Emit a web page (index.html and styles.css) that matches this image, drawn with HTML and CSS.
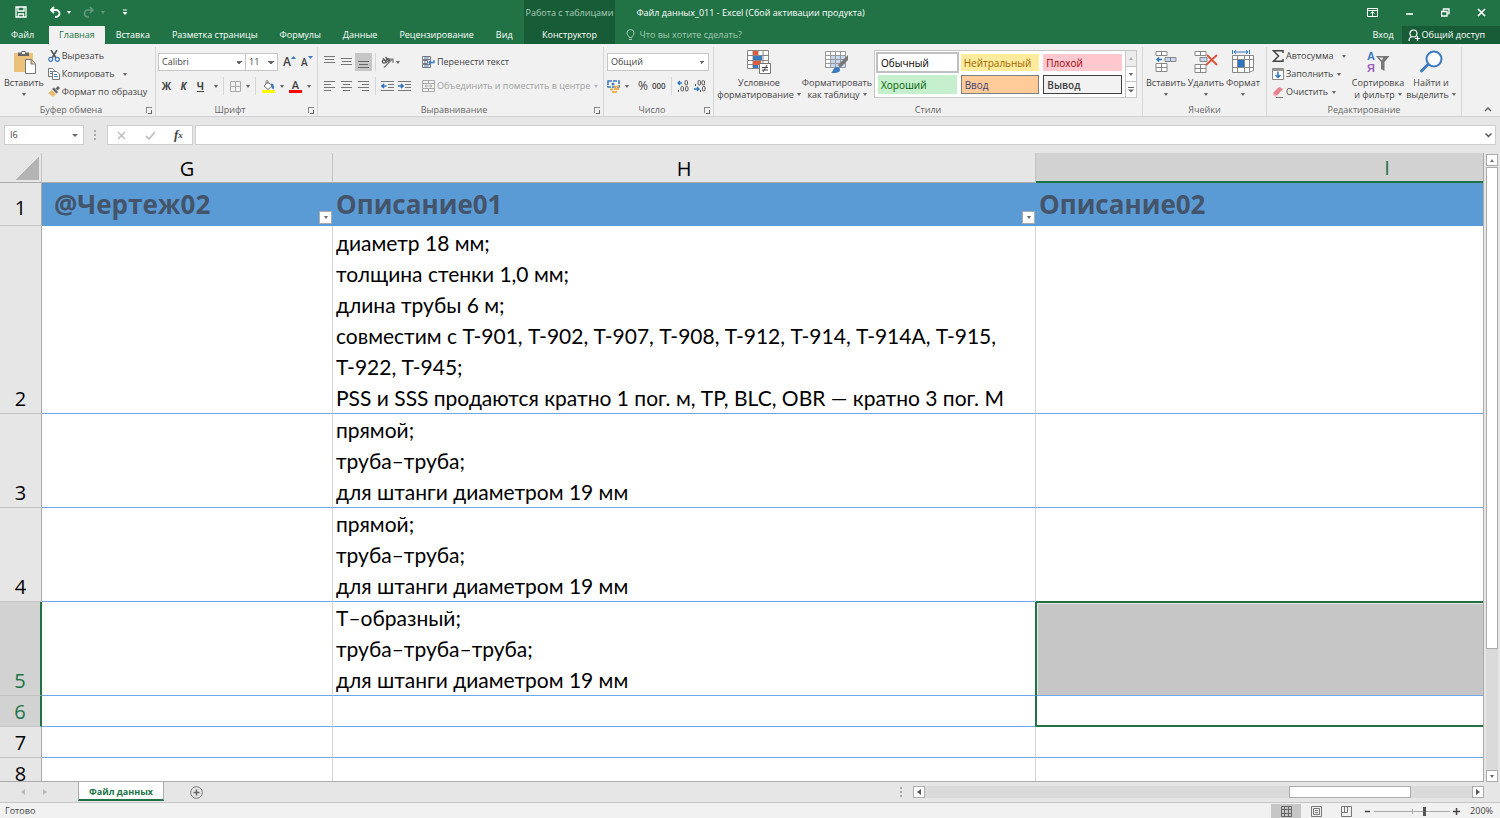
FILE: index.html
```html
<!DOCTYPE html>
<html lang="ru">

<head>
    <meta charset="UTF-8">
    <meta name="viewport" content="width=device-width, initial-scale=1.0">
    <title>Файл данных_011 - Excel</title>
    <link rel="stylesheet" href="styles.css">
</head>

<body>
    <header class="top">
        <div class="top-left">
            <div class="quick">
                <button type="button" aria-label="Сохранить"><svg width="12" height="12" viewBox="0 0 12 12"><path d="M1 1h10v10H1zM3 1v4h6V1M3.5 11V8h5v3" fill="none" stroke="#fff" stroke-width="1.3"/></svg></button>
                <button type="button" class="undo" aria-label="Отменить"><svg width="12" height="12" viewBox="0 0 12 12"><path d="M5 1L2 4l3 3M2 4h5a3 3 0 0 1 0 7H6" fill="none" stroke="#fff" stroke-width="1.8"/></svg><i class="arr"></i></button>
                <button type="button" class="redo" aria-label="Вернуть"><svg width="12" height="12" viewBox="0 0 12 12"><path d="M7 1l3 3-3 3M10 4H5a3 3 0 0 0 0 7h1" fill="none" stroke="#fff" stroke-width="1.6"/></svg><i class="arr"></i></button>
                <button type="button" class="custom" aria-label="Настройка панели"><svg width="6" height="7" viewBox="0 0 6 7"><path d="M1 1h4" stroke="#fff"/><path d="M0.500 3h5L3 6z" fill="#fff"/></svg></button>
            </div>
            <nav class="tabs">
                <a href="#" class="file">Файл</a>
                <a href="#" class="on">Главная</a>
                <a href="#">Вставка</a>
                <a href="#">Разметка страницы</a>
                <a href="#">Формулы</a>
                <a href="#">Данные</a>
                <a href="#">Рецензирование</a>
                <a href="#">Вид</a>
            </nav>
        </div>
        <div class="context">
            <span>Работа с таблицами</span>
            <a href="#">Конструктор</a>
        </div>
        <div class="top-right">
            <div class="caption">
                <h1>Файл данных_011 - Excel (Сбой активации продукта)</h1>
                <div class="win">
                    <button type="button" aria-label="Параметры ленты"><svg width="11" height="9" viewBox="0 0 11 9"><path d="M.5.5h10v8H.5zM1 2.500h9M5.500 8V4M3.500 5.500l2-2 2 2" fill="none" stroke="#fff"/></svg></button>
                    <button type="button" aria-label="Свернуть"><svg width="9" height="9" viewBox="0 0 9 9"><path d="M1 6h7" stroke="#fff" stroke-width="1.600"/></svg></button>
                    <button type="button" aria-label="Восстановить"><svg width="9" height="9" viewBox="0 0 9 9"><path d="M.5 3.500h5.500v4.500H.5zM2.500 3V1h5.500v4.500H6.500" fill="none" stroke="#fff" stroke-width="1.300"/></svg></button>
                    <button type="button" aria-label="Закрыть"><svg width="9" height="9" viewBox="0 0 9 9"><path d="M1 1l7 7M8 1L1 8" stroke="#fff" stroke-width="1.700"/></svg></button>
                </div>
            </div>
            <div class="tellrow">
                <label for="tell"><svg width="9" height="12" viewBox="0 0 9 12"><path d="M3 8.500C3 7 1 6 1 4a3.500 3.500 0 0 1 7 0c0 2-2 3-2 4.500zM3 10.500h3" fill="none" stroke="#a3cbb3"/></svg></label>
                <input id="tell" type="text" placeholder="Что вы хотите сделать?">
                <a href="#" class="login">Вход</a>
                <button type="button" class="share"><svg width="12" height="13" viewBox="0 0 12 13"><circle cx="5.500" cy="4.500" r="3.500" fill="none" stroke="#fff" stroke-width="1.200"/><path d="M1 12c0-2.500 1-4 3-4.500M9.500 7v5M7 9.500h5" fill="none" stroke="#fff" stroke-width="1.200"/></svg>Общий доступ</button>
            </div>
        </div>
    </header>

    <div class="ribbon">
        <section class="group clip">
            <div class="body">
                <button type="button" class="big"><svg width="24" height="24" viewBox="0 0 24 24"><path d="M2 3h19v19H2z" fill="#ecc27b"/><path d="M6 6V2.500h3.500V1h4v1.500H17V6z" fill="#666"/><path d="M10 2h3v2h-3z" fill="#f1f1f1"/><path d="M13.500 9.500h6l4 4v10h-10zM19 9.500V14h4.500" fill="#fff" stroke="#777"/></svg><span>Вставить</span><i class="arr"></i></button>
                <div class="list">
                    <button type="button"><svg width="12" height="12" viewBox="0 0 12 12"><path d="M3 0l5 8M9 0L4 8" stroke="#555" stroke-width="1.500"/><circle cx="2.700" cy="9.300" r="2" fill="none" stroke="#3c7abf" stroke-width="1.200"/><circle cx="9.300" cy="9.300" r="2" fill="none" stroke="#3c7abf" stroke-width="1.200"/></svg>Вырезать</button>
                    <button type="button"><svg width="12" height="12" viewBox="0 0 12 12"><path d="M.5.5h4l2 2v6h-6z" fill="#fff" stroke="#777"/><path d="M2 3.500h2M2 5.500h2" stroke="#3c7abf"/><path d="M4.500 3.500h4l3 2.500v5.500h-7z" fill="#fff" stroke="#777"/><path d="M6 6.500h3M6 8.500h4" stroke="#3c7abf"/></svg>Копировать<i class="arr far"></i></button>
                    <button type="button"><svg width="12" height="12" viewBox="0 0 12 12"><path d="M0 7l4-3 4 4-3 3-1-1z" fill="#ecb970"/><path d="M4 3l2-1.500L10 6 8.500 7.500zM7.500 2.500L10 0l2 2-2.500 2.500z" fill="#666"/></svg>Формат по образцу</button>
                </div>
            </div>
            <h2>Буфер обмена</h2><button type="button" class="launch" aria-label="Буфер обмена"></button>
        </section>

        <section class="group font">
            <div class="body rows">
                <div class="row">
                    <select class="fname" aria-label="Шрифт"><option>Calibri</option></select>
                    <select class="fsize" aria-label="Размер"><option>11</option></select>
                    <button type="button" class="grow" aria-label="Увеличить"><b class="ga">A</b><svg width="5" height="4" viewBox="0 0 5 4"><path d="M0 3l2.500-3L5 3z" fill="#3c7abf"/></svg></button>
                    <button type="button" class="grow small" aria-label="Уменьшить"><b class="ga">A</b><svg width="5" height="4" viewBox="0 0 5 4"><path d="M0 0l2.500 3L5 0z" fill="#3c7abf"/></svg></button>
                </div>
                <div class="row second">
                    <button type="button" class="fmt"><b>Ж</b></button>
                    <button type="button" class="fmt"><b><em>К</em></b></button>
                    <button type="button" class="fmt"><b><u>Ч</u></b></button>
                    <i class="arr"></i>
                    <i class="bar"></i>
                    <button type="button" aria-label="Границы"><svg width="11" height="11" viewBox="0 0 11 11"><path d="M.5.5h10v10H.5zM5.500 0v11M0 5.500h11" fill="none" stroke="#aaa"/></svg></button>
                    <i class="arr"></i>
                    <i class="bar"></i>
                    <button type="button" aria-label="Цвет заливки"><svg width="13" height="13" viewBox="0 0 13 13"><path d="M2 6l4-4 4 4-4 3.500zM4 4V1.500a1 1 0 0 1 2 0V4" fill="#fff" stroke="#777"/><path d="M9 3.500c3 0 3.500 3 2.500 6-1.500-.5-2.500-3-2.500-6z" fill="#3c7abf"/><path d="M0 10h13v3H0z" fill="#ff0"/></svg></button>
                    <i class="arr"></i>
                    <button type="button" class="color" aria-label="Цвет текста">A</button>
                    <i class="arr"></i>
                </div>
            </div>
            <h2>Шрифт</h2><button type="button" class="launch" aria-label="Шрифт"></button>
        </section>

        <section class="group align">
            <div class="body">
                <div class="rows">
                    <div class="row">
                        <button type="button" class="al" aria-label="По верхнему краю"><svg width="11" height="12" viewBox="0 0 11 12"><path d="M0 .5h11M1 3.500h9M0 6.500h11" stroke="#777"/></svg></button>
                        <button type="button" class="al" aria-label="Посередине"><svg width="11" height="12" viewBox="0 0 11 12"><path d="M0 2.500h11M1 5.500h9M0 8.500h11" stroke="#777"/></svg></button>
                        <button type="button" class="al pressed" aria-label="По нижнему краю"><svg width="11" height="12" viewBox="0 0 11 12"><path d="M0 5.500h11M1 8.500h9M0 11.500h11" stroke="#666"/></svg></button>
                        <i class="bar"></i>
                        <button type="button" class="al" aria-label="Ориентация"><svg width="13" height="12" viewBox="0 0 13 12"><path d="M3 11.500L11.500 3M8 3h4v4" fill="none" stroke="#777" stroke-width="1.200"/><circle cx="3" cy="5.500" r="1.700" fill="none" stroke="#555" stroke-width="1.200"/><path d="M2 2l4 5M4.500 1l3.500 4" stroke="#555" stroke-width="1.200"/><circle cx="7" cy="4" r="1.500" fill="none" stroke="#555"/></svg></button>
                        <i class="arr"></i>
                    </div>
                    <div class="row second">
                        <button type="button" class="al" aria-label="По левому краю"><svg width="11" height="10" viewBox="0 0 11 10"><path d="M0 .5h11M0 3.500h7M0 6.500h11M0 9.500h7" stroke="#777"/></svg></button>
                        <button type="button" class="al" aria-label="По центру"><svg width="11" height="10" viewBox="0 0 11 10"><path d="M0 .5h11M2 3.500h7M0 6.500h11M2 9.500h7" stroke="#777"/></svg></button>
                        <button type="button" class="al" aria-label="По правому краю"><svg width="11" height="10" viewBox="0 0 11 10"><path d="M0 .5h11M4 3.500h7M0 6.500h11M4 9.500h7" stroke="#777"/></svg></button>
                        <i class="bar"></i>
                        <button type="button" class="al" aria-label="Уменьшить отступ"><svg width="13" height="10" viewBox="0 0 13 10"><path d="M0 .5h13M7 3.500h6M7 6.500h6M0 9.500h13" stroke="#777"/><path d="M5.500 5H1M3 3L1 5l2 2" fill="none" stroke="#2f75bd" stroke-width="1.700"/></svg></button>
                        <button type="button" class="al" aria-label="Увеличить отступ"><svg width="13" height="10" viewBox="0 0 13 10"><path d="M0 .5h13M7 3.500h6M7 6.500h6M0 9.500h13" stroke="#777"/><path d="M0 5h4.500M3 3l2 2-2 2" fill="none" stroke="#2f75bd" stroke-width="1.700"/></svg></button>
                    </div>
                </div>
                <div class="rows wrap">
                    <button type="button" class="row"><svg width="13" height="13" viewBox="0 0 13 13"><path d="M.5.5h8v3h-8zM.5 4.500h5v3h-5zM.5 8.500h8v3h-8z" fill="#fff" stroke="#777"/><path d="M2 2h5M2 6h2M2 10h5" stroke="#3c7abf"/><path d="M12 4v2.500H7M9 4.500l-2 2 2 2" fill="none" stroke="#3c7abf" stroke-width="1.300"/></svg>Перенести текст</button>
                    <button type="button" class="row second off"><svg width="13" height="12" viewBox="0 0 13 12"><path d="M.5.5h12v11H.5zM.5 3.500h12M.5 8.500h12M6.500.5v3M6.500 8.500v3M3 6h7M4.500 4.500L3 6l1.500 1.500M8.500 4.500L10 6 8.500 7.500" fill="none" stroke="#aaa"/></svg>Объединить и поместить в центре<i class="arr"></i></button>
                </div>
            </div>
            <h2>Выравнивание</h2><button type="button" class="launch" aria-label="Выравнивание"></button>
        </section>

        <section class="group number">
            <div class="body rows">
                <div class="row"><select class="nf" aria-label="Числовой формат"><option>Общий</option></select></div>
                <div class="row second">
                    <button type="button" aria-label="Финансовый формат"><svg width="13" height="13" viewBox="0 0 13 13"><path d="M1 1h11v6H1z" fill="#fff" stroke="#3c7abf" stroke-width="1.600" stroke-dasharray="4 1"/><circle cx="6" cy="4" r="1.500" fill="#3c7abf"/><path d="M7 6.500h5M7 9h5M3 9.500h3M5 12h5" stroke="#ecb250" stroke-width="1.800"/></svg></button>
                    <i class="arr"></i>
                    <button type="button" class="pct">%</button>
                    <button type="button" class="zeros">000</button>
                    <i class="bar"></i>
                    <button type="button" aria-label="Увеличить разрядность"><svg width="12" height="12" viewBox="0 0 12 12"><path d="M5 3H1M3 1L1 3l2 2" fill="none" stroke="#2f75bd" stroke-width="1.300"/><rect x="8" y=".5" width="2.500" height="4.500" rx="1.200" fill="none" stroke="#555"/><rect x="4" y="6.500" width="2.500" height="4.500" rx="1.200" fill="none" stroke="#555"/><rect x="8.500" y="6.500" width="2.500" height="4.500" rx="1.200" fill="none" stroke="#555"/><path d="M1.500 10v2" stroke="#555"/></svg></button>
                    <button type="button" class="dec" aria-label="Уменьшить разрядность"><svg width="12" height="12" viewBox="0 0 12 12"><path d="M0 9h4.500M3 7l2 2-2 2" fill="none" stroke="#2f75bd" stroke-width="1.300"/><rect x="4" y=".5" width="2.500" height="4.500" rx="1.200" fill="none" stroke="#555"/><rect x="8" y=".5" width="2.500" height="4.500" rx="1.200" fill="none" stroke="#555"/><rect x="8.500" y="6.500" width="2.500" height="4.500" rx="1.200" fill="none" stroke="#555"/><path d="M6.500 10v2M1.500 4v2" stroke="#555"/></svg></button>
                </div>
            </div>
            <h2>Число</h2><button type="button" class="launch" aria-label="Число"></button>
        </section>

        <section class="group styles">
            <div class="body">
                <button type="button" class="big cond"><svg width="24" height="24" viewBox="0 0 24 24"><path d="M.5.5h21v18H.5z" fill="#fff"/><path d="M.5.5h21v18H.5zM.5 5.500h21M.5 10.500h21M.5 14.500h21M6 .5v18M11 .5v18M16 .5v18" fill="none" stroke="#888"/><path d="M6 1h5v4H6zM6 11h8v4H6z" fill="#e2593b"/><path d="M6 6h9v4H6zM6 15h5v3H6z" fill="#3c7abf"/><path d="M12.500 13.500h11v10h-11z" fill="#fff" stroke="#777"/><path d="M15 17.500h6M15 20h6M20 15l-4 7" stroke="#444"/></svg><span>Условное<br>форматирование<i class="arr"></i></span></button>
                <button type="button" class="big tbl"><svg width="24" height="24" viewBox="0 0 24 24"><path d="M.5 1.500h20v16H.5z" fill="#fff"/><path d="M6 6h14v11H6z" fill="#c3d7ee"/><path d="M.5 1.500h20v16H.5zM.5 5.500h20M.5 9.500h20M.5 13.500h20M5.500 1.500v16M10.500 1.500v16M15.500 1.500v16" fill="none" stroke="#999"/><path d="M23 5v5l-8 8-2-3z" fill="#777"/><path d="M6 23c2-1 2-6 6-6 3 0 4 3 2 5-2 1-5 1-8 1z" fill="#3c7abf"/></svg><span>Форматировать<br>как таблицу<i class="arr"></i></span></button>
                <div class="gallery">
                    <div class="cards">
                        <button type="button" class="normal">Обычный</button>
                        <button type="button" class="neutral">Нейтральный</button>
                        <button type="button" class="bad">Плохой</button>
                        <button type="button" class="good">Хороший</button>
                        <button type="button" class="in">Ввод</button>
                        <button type="button" class="out">Вывод</button>
                    </div>
                    <div class="spin">
                        <button type="button" class="dim" aria-label="Вверх"><i class="arr up"></i></button>
                        <button type="button" aria-label="Вниз"><i class="arr"></i></button>
                        <button type="button" aria-label="Все стили"><svg width="6" height="6" viewBox="0 0 6 6"><path d="M0 .5h6" stroke="#666"/><path d="M0 2.500h6L3 5.500z" fill="#666"/></svg></button>
                    </div>
                </div>
            </div>
            <h2>Стили</h2>
        </section>

        <section class="group cells">
            <div class="body">
                <button type="button" class="big"><svg width="24" height="24" viewBox="0 0 24 24"><path d="M2 1.500h11v4H2zM7.500 1.500v4M2 13.500h11v8H2zM2 17.500h11M7.500 13.500v8" fill="#fff" stroke="#888"/><path d="M11 7.500h11v4H11zM16.500 7.500v4" fill="#c3d7ee" stroke="#888"/><path d="M8 9.500H3M5 7.500l-2 2 2 2" fill="none" stroke="#2f75bd" stroke-width="1.500"/></svg><span>Вставить</span><i class="arr"></i></button>
                <button type="button" class="big"><svg width="24" height="24" viewBox="0 0 24 24"><path d="M1 1.500h11v4H1zM6.500 1.500v4M1 14.500h11v8H1zM1 18.500h11M6.500 14.500v8" fill="#fff" stroke="#888"/><path d="M6 7.500h7v4H6z" fill="#c3d7ee" stroke="#888"/><path d="M13 5l10 10M23 5L12 15" stroke="#dd5136" stroke-width="1.800"/></svg><span>Удалить</span><i class="arr"></i></button>
                <button type="button" class="big"><svg width="24" height="24" viewBox="0 0 24 24"><path d="M1.500 5.500h21v15l-5 2h-16z" fill="#fff" stroke="#888"/><path d="M1.500 9.500h21M1.500 17.500h21M6.500 5.500v17M13.500 5.500v17M18.500 5.500v17" stroke="#888"/><path d="M7 10h6v7H7z" fill="#2f75bd"/><path d="M1.500 0v4M18.500 0v4M3 2h14M5 0L3 2l2 2M15 0l2 2-2 2" fill="none" stroke="#2f75bd"/></svg><span>Формат</span><i class="arr"></i></button>
            </div>
            <h2>Ячейки</h2>
        </section>

        <section class="group edit">
            <div class="body">
                <div class="list">
                    <button type="button"><svg width="12" height="12" viewBox="0 0 12 12"><path d="M11 3V.8H1.500L6.500 6l-5 5.200H11V9" fill="none" stroke="#444" stroke-width="1.500"/></svg>Автосумма<i class="arr far"></i></button>
                    <button type="button"><svg width="12" height="12" viewBox="0 0 12 12"><path d="M.5.5h11v11H.5z" fill="#fff" stroke="#888"/><path d="M1 2h10" stroke="#999" stroke-width="2"/><path d="M6 3.500V10M3.500 7L6 9.500 8.500 7" fill="none" stroke="#2f75bd" stroke-width="1.500"/></svg>Заполнить<i class="arr"></i></button>
                    <button type="button"><svg width="12" height="12" viewBox="0 0 12 12"><path d="M1 7l6-6 4 2-6 6.500H2z" fill="#e8808f"/><path d="M1 7l4 2.500L3.500 11 1 9z" fill="#f5b6be"/><path d="M4 11.500h7" stroke="#777"/></svg>Очистить<i class="arr"></i></button>
                </div>
                <button type="button" class="big sort"><svg width="24" height="24" viewBox="0 0 24 24"><text x="1" y="10" class="la">А</text><text x="1" y="22" class="ya">Я</text><path d="M10 6h13.500l-5 6v9l-3.500-2v-7z" fill="#777"/><path d="M13 7.500h4l-1 3z" fill="#eee"/></svg><span>Сортировка<br>и фильтр<i class="arr"></i></span></button>
                <button type="button" class="big find"><svg width="24" height="24" viewBox="0 0 24 24"><circle cx="15" cy="9" r="7.500" fill="#fff" stroke="#3c7abf" stroke-width="2"/><path d="M9 14.500L2.500 21" stroke="#3c7abf" stroke-width="3" stroke-linecap="round"/></svg><span>Найти и<br>выделить<i class="arr"></i></span></button>
            </div>
            <h2>Редактирование</h2>
        </section>
        <button type="button" class="fold" aria-label="Свернуть ленту"><svg width="8" height="5" viewBox="0 0 8 5"><path d="M1 4l3-3 3 3" fill="none" stroke="#666" stroke-width="1.500"/></svg></button>
    </div>

    <div class="fbar">
        <div class="namebox"><input type="text" value="I6" aria-label="Имя"><i class="arr"></i></div>
        <i class="dots"></i>
        <div class="fbtns">
            <button type="button" aria-label="Отмена"><svg width="9" height="9" viewBox="0 0 9 9"><path d="M1 1l7 7M8 1L1 8" stroke="#bbb" stroke-width="1.300"/></svg></button>
            <button type="button" aria-label="Ввод"><svg width="11" height="9" viewBox="0 0 11 9"><path d="M1 5l3 3 6-7" fill="none" stroke="#bbb" stroke-width="1.600"/></svg></button>
            <button type="button" class="fx">f<small>x</small></button>
        </div>
        <div class="formula"><input type="text" aria-label="Строка формул"><svg width="7" height="5" viewBox="0 0 7 5"><path d="M.5.5l3 3 3-3" fill="none" stroke="#555" stroke-width="1.500"/></svg></div>
    </div>

    <main class="work">
        <div class="grid">
            <table>
                <colgroup><col class="c0"><col class="cg"><col class="ch"><col class="ci"></colgroup>
                <thead>
                    <tr><th class="corner"></th><th>G</th><th>H</th><th class="sel">I</th></tr>
                </thead>
                <tbody>
                    <tr class="head">
                        <th>1</th>
                        <td class="pad">@Чертеж02<button type="button" aria-label="Фильтр"><i class="arr"></i></button></td>
                        <td>Описание01<button type="button" aria-label="Фильтр"><i class="arr"></i></button></td>
                        <td>Описание02</td>
                    </tr>
                    <tr class="r2">
                        <th>2</th>
                        <td></td>
                        <td>диаметр 18 мм;<br>толщина стенки 1,0 мм;<br>длина трубы 6 м;<br>совместим с Т-901, Т-902, Т-907, Т-908, Т-912, Т-914, Т-914А, Т-915,<br>Т-922, Т-945;<br>PSS и SSS продаются кратно 1 пог. м, TP, BLC, OBR — кратно 3 пог. М</td>
                        <td></td>
                    </tr>
                    <tr class="r3">
                        <th>3</th>
                        <td></td>
                        <td>прямой;<br>труба–труба;<br>для штанги диаметром 19 мм</td>
                        <td></td>
                    </tr>
                    <tr class="r3">
                        <th>4</th>
                        <td></td>
                        <td>прямой;<br>труба–труба;<br>для штанги диаметром 19 мм</td>
                        <td class="above"></td>
                    </tr>
                    <tr class="r3">
                        <th class="sel">5</th>
                        <td></td>
                        <td class="beside">Т–образный;<br>труба–труба–труба;<br>для штанги диаметром 19 мм</td>
                        <td class="picked"></td>
                    </tr>
                    <tr>
                        <th class="sel">6</th>
                        <td></td>
                        <td class="beside"></td>
                        <td class="active"></td>
                    </tr>
                    <tr><th>7</th><td></td><td></td><td></td></tr>
                    <tr><th>8</th><td></td><td></td><td></td></tr>
                </tbody>
            </table>
        </div>
        <div class="vscroll">
            <button type="button" aria-label="Вверх"><i class="arr up"></i></button>
            <div class="thumb"></div>
            <div class="rest"></div>
            <button type="button" aria-label="Вниз"><i class="arr"></i></button>
        </div>
    </main>

    <div class="sheets">
        <div class="arrows"><i class="arr left"></i><i class="arr right"></i></div>
        <a href="#" class="sheet">Файл данных</a>
        <button type="button" class="plus" aria-label="Новый лист"><svg width="13" height="13" viewBox="0 0 13 13"><circle cx="6.500" cy="6.500" r="5.800" fill="none" stroke="#777"/><path d="M6.500 3.500v6M3.500 6.500h6" stroke="#666" stroke-width="1.600"/></svg></button>
        <i class="dots"></i>
        <div class="hscroll">
            <button type="button" aria-label="Влево"><i class="arr left"></i></button>
            <div class="before"></div>
            <div class="thumb"></div>
            <div class="rest"></div>
            <button type="button" aria-label="Вправо"><i class="arr right"></i></button>
        </div>
    </div>

    <footer class="status">
        <span>Готово</span>
        <div class="views">
            <button type="button" class="on" aria-label="Обычный"><svg width="11" height="11" viewBox="0 0 11 11"><path d="M.5.5h10v10H.5zM.5 3.500h10M.5 7.500h10M3.500.5v10M7.500.5v10" fill="none" stroke="#666"/></svg></button>
            <button type="button" aria-label="Разметка страницы"><svg width="11" height="11" viewBox="0 0 11 11"><path d="M.5.5h10v10H.5zM2.500 2.500h6v6h-6zM4 4.500h3M4 6.500h3" fill="none" stroke="#777"/></svg></button>
            <button type="button" aria-label="Страничный режим"><svg width="11" height="11" viewBox="0 0 11 11"><path d="M.5.5h10v10H.5zM3.500.5v6M.5 6.500h6M6.500.5v6" fill="none" stroke="#777"/></svg></button>
        </div>
        <button type="button" class="sign" aria-label="Уменьшить"><svg width="7" height="7" viewBox="0 0 7 7"><path d="M1 3.500h5" stroke="#444" stroke-width="1.500"/></svg></button>
        <input type="range" min="0" max="100" value="67" aria-label="Масштаб">
        <button type="button" class="sign" aria-label="Увеличить"><svg width="7" height="7" viewBox="0 0 7 7"><path d="M0 3.500h7M3.500 0v7" stroke="#444" stroke-width="1.500"/></svg></button>
        <span class="zoom">200%</span>
    </footer>
</body>

</html>
```
FILE: styles.css
```css
*{
    box-sizing: border-box;
    margin: 0;
    padding: 0;
}
body{
    display: flex;
    flex-direction: column;
    height: 100vh;
    overflow: hidden;
    background-color: #e6e6e6;
    color: #444;
    font: 9px/12px "Open Sans", "Noto Sans", sans-serif;
}
button,input,select{
    font: inherit;
    color: inherit;
    border: 0;
    background: none;
    outline: none;
}
button{
    display: flex;
    align-items: center;
    justify-content: center;
    white-space: nowrap;
}
a{
    color: inherit;
    text-decoration: none;
    white-space: nowrap;
}
svg{
    display: block;
    flex: none;
}
h1,h2{
    font-size: 9px;
    font-weight: normal;
}
.arr{
    display: inline-block;
    flex: none;
    width: 0;
    height: 0;
    border: 2px solid transparent;
    border-top: 3px solid #666;
    border-bottom: 0;
}
.arr.up{
    border-top: 0;
    border-bottom: 3px solid #777;
}
.arr.left{
    border: 3px solid transparent;
    border-left: 0;
    border-right: 4px solid #555;
}
.arr.right{
    border: 3px solid transparent;
    border-right: 0;
    border-left: 4px solid #555;
}
.dots{
    width: 2px;
    height: 10px;
    border-left: 2px dotted #aaa;
}

/* шапка */
.top{
    display: flex;
    height: 44px;
    flex: none;
    background-color: #217346;
    color: #fff;
}
.quick{
    display: flex;
    align-items: center;
    height: 26px;
    padding: 0 0 2px 15px;
}
.quick button{
    gap: 6px;
}
.quick .arr{
    border-top-color: #fff;
}
.quick .undo{
    margin-left: 22px;
}
.quick .redo{
    margin-left: 12px;
    opacity: 0.3;
}
.quick .custom{
    margin-left: 17px;
}
.tabs{
    display: flex;
    height: 18px;
}
.tabs a{
    padding: 3px 11px 0;
}
.tabs .on{
    background-color: #f1f1f1;
    color: #217346;
    margin-left: 4px;
    padding: 3px 10px 0;
}
.context{
    background-color: #185c37;
    padding: 0 2px;
    text-align: center;
}
.context span{
    display: block;
    height: 26px;
    padding-top: 7px;
    color: #a9cdb8;
}
.context a{
    display: block;
    padding-top: 3px;
}
.top-right{
    flex: 1;
}
.caption{
    display: flex;
    justify-content: space-between;
    height: 26px;
    padding-left: 21px;
}
.caption h1{
    padding-top: 7px;
}
.win{
    display: flex;
    gap: 27px;
    padding: 0 14px 2px 0;
}
.tellrow{
    display: flex;
    align-items: center;
    height: 18px;
    padding-left: 11px;
}
.tellrow input{
    flex: 1;
    padding-left: 4px;
}
.tellrow input::placeholder{
    color: #a3cbb3;
    opacity: 1;
}
.login{
    padding-right: 8px;
}
.share{
    align-self: stretch;
    gap: 2px;
    padding: 0 15px 0 6px;
    background-color: #185c37;
}

/* лента */
.ribbon{
    display: flex;
    height: 73px;
    flex: none;
    background-color: #f1f1f1;
    border-bottom: 1px solid #d2d2d2;
}
.group{
    position: relative;
    flex: none;
    display: flex;
    flex-direction: column;
    margin-top: 3px;
    border-right: 1px solid #d6d6d6;
}
.body{
    display: flex;
    height: 57px;
    flex: none;
}
.group h2{
    text-align: center;
    color: #666;
}
.clip h2,.font h2,.align h2,.number h2{
    padding-right: 13px;
}
.launch{
    position: absolute;
    right: 3px;
    bottom: 3px;
    width: 6px;
    height: 6px;
    border-left: 1px solid #888;
    border-top: 1px solid #888;
}
.launch::after{
    content: "";
    width: 3px;
    height: 3px;
    margin: 2px 0 0 1px;
    border-right: 1px solid #666;
    border-bottom: 1px solid #666;
}
.clip{
    width: 156px;
}
.font{
    width: 162px;
}
.align{
    width: 286px;
}
.number{
    width: 110px;
}
.styles{
    width: 429px;
}
.cells{
    width: 124px;
}
.edit{
    width: 195px;
}
.big{
    flex-direction: column;
    justify-content: flex-start;
    align-items: center;
    padding-top: 3px;
    line-height: 12px;
}
.big svg{
    margin-bottom: 3px;
    overflow: visible;
}
.big > .arr{
    margin-top: 4px;
}
.big span .arr{
    margin: 0 0 2px 3px;
}
.clip .big{
    margin: 0 4px;
}
.list{
    display: flex;
    flex-direction: column;
}
.list button{
    justify-content: flex-start;
    height: 18px;
    gap: 2px;
}
.list .arr{
    margin-left: 2px;
}
.list .far{
    margin-left: 6px;
}
.rows{
    display: flex;
    flex-direction: column;
    padding-top: 6px;
}
.row{
    display: flex;
    align-items: center;
    height: 18px;
}
.row.second{
    margin-top: 6px;
}
.bar{
    width: 1px;
    height: 18px;
    background-color: #d6d6d6;
}
select{
    appearance: none;
    height: 18px;
    padding-left: 3px;
    border: 1px solid #c6c6c6;
    background: linear-gradient(45deg, transparent 50%, #666 50%) no-repeat right 6px center / 3px 3px, linear-gradient(135deg, #666 50%, transparent 50%) no-repeat right 3px center / 3px 3px, #fff;
}
.font .body{
    padding-left: 2px;
}
.fname{
    width: 88px;
}
.fsize{
    width: 33px;
    margin-left: -1px;
}
.grow{
    margin-left: 5px;
    align-items: flex-start;
}
.ga{
    font-size: 12px;
    font-weight: 600;
}
.small .ga{
    font-size: 10px;
}
.fmt{
    width: 17px;
    font-size: 10px;
}
.font .second .arr,.number .second .arr{
    margin: 0 5px;
}
.font .bar{
    margin-right: 6px;
}
.color{
    width: 13px;
    height: 13px;
    border-bottom: 3px solid #f00;
    font-size: 11px;
    font-weight: 600;
    line-height: 10px;
}
.al{
    width: 17px;
    height: 18px;
}
.pressed{
    background-color: #c6c6c6;
}
.align .rows:first-child{
    width: 104px;
    padding-left: 3px;
}
.align .bar{
    margin: 0 3px;
}
.align .wrap{
    align-items: flex-start;
}
.wrap .row{
    gap: 2px;
}
.wrap .arr{
    margin-left: 2px;
}
.off{
    color: #a0a0a0;
}
.off .arr{
    border-top-color: #bbb;
}
.number .body{
    padding-left: 3px;
}
.nf{
    width: 102px;
}
.pct{
    font-size: 12px;
    margin-left: 4px;
}
.zeros{
    font-size: 8px;
    font-weight: 600;
    margin-left: 4px;
}
.number .bar{
    margin: 0 5px;
}
.dec{
    margin-left: 5px;
}
.cond{
    width: 90px;
}
.tbl{
    width: 66px;
}
.gallery{
    display: flex;
    width: 263px;
    height: 48px;
    margin: 3px 0 0 4px;
    border: 1px solid #c6c6c6;
    background-color: #fff;
}
.cards{
    flex: 1;
    display: grid;
    grid-template-columns: repeat(3, 1fr);
    gap: 4px;
    padding: 3px;
}
.cards button{
    justify-content: flex-start;
    padding-left: 3px;
    font-size: 10px;
}
.cards .normal{
    color: #000;
    outline: 2px solid #c0c0c0;
}
.neutral{
    background-color: #ffeb9c;
    color: #9c6500;
}
.bad{
    background-color: #ffc7ce;
    color: #9c0006;
}
.good{
    background-color: #c6efce;
    color: #006100;
}
.in{
    background-color: #ffcc99;
    border: 1px solid #7f7f7f;
    color: #3f3f76;
}
.cards .out{
    background-color: #f2f2f2;
    border: 1px solid #3f3f3f;
    color: #3f3f3f;
    font-weight: 600;
}
.spin{
    display: flex;
    flex-direction: column;
    width: 11px;
    border-left: 1px solid #c6c6c6;
}
.spin button{
    flex: 1;
}
.spin button + button{
    border-top: 1px solid #c6c6c6;
}
.dim{
    background-color: #e1e1e1;
    opacity: 0.6;
}
.cells .body{
    gap: 2px;
    padding-left: 3px;
}
.edit .list{
    width: 84px;
    padding-left: 5px;
}
.sort{
    width: 54px;
}
.find{
    width: 52px;
}
.la,.ya{
    font: bold 11px "Liberation Sans", sans-serif;
    fill: #3c7abf;
}
.ya{
    fill: #9b5fc0;
}
.fold{
    margin: auto 8px 4px auto;
}

/* строка формул */
.fbar{
    display: flex;
    align-items: center;
    height: 36px;
    flex: none;
    padding: 0 4px;
}
.namebox,.fbtns,.formula{
    display: flex;
    align-items: center;
    height: 20px;
    border: 1px solid #cfcfcf;
    background-color: #fff;
}
.namebox{
    width: 80px;
    padding: 0 5px;
}
.namebox input{
    flex: 1;
    width: 40px;
}
.namebox .arr{
    border-width: 3px 3px 0;
}
.fbar .dots{
    margin: 0 11px 0 10px;
}
.fbtns{
    width: 86px;
    justify-content: space-around;
}
.fx{
    font: italic bold 13px "Liberation Serif", serif;
}
.fx small{
    font-size: 9px;
}
.formula{
    flex: 1;
    margin-left: 2px;
    padding-right: 3px;
}
.formula input{
    flex: 1;
    padding-left: 4px;
}

/* таблица */
.work{
    display: flex;
    flex: 1;
    min-height: 0;
}
.grid{
    flex: 1;
    min-width: 0;
    overflow: hidden;
    border-right: 1px solid #ababab;
    border-bottom: 1px solid #ababab;
}
table{
    width: 1739px;
    table-layout: fixed;
    border-collapse: separate;
    border-spacing: 0;
    background-color: #fff;
    color: #000;
    font: 20px/31px "Open Sans", "Noto Sans", sans-serif;
}
.c0{
    width: 42px;
}
.cg{
    width: 291px;
}
.ch{
    width: 703px;
}
th{
    font-weight: normal;
    line-height: 29px;
    background-color: #e6e6e6;
    border-right: 1px solid #ababab;
    border-bottom: 1px solid #ababab;
}
thead th{
    height: 30px;
    padding-top: 2px;
    border-right-color: #c4c4c4;
    line-height: 27px;
}
thead .sel{
    background-color: #d2d2d2;
    border-bottom: 2px solid #217346;
    color: #217346;
    line-height: 26px;
}
.corner{
    background: linear-gradient(135deg, transparent 50%, #b4b4b4 50%) no-repeat right 2px bottom 2px / 23px 23px #e6e6e6;
}
tbody tr{
    height: 31px;
}
tbody th{
    vertical-align: bottom;
    border-bottom-color: #c4c4c4;
}
tbody .sel{
    background-color: #d2d2d2;
    border-right: 2px solid #217346;
    color: #217346;
}
td{
    vertical-align: bottom;
    padding: 0 3px;
    white-space: nowrap;
    border-right: 1px solid #d4d4d4;
    border-bottom: 1px solid #6ea8ea;
    font-family: Lato, "Open Sans", sans-serif;
    font-size: 21px;
}
tbody .head{
    height: 43px;
}
.head th{
    padding-bottom: 3px;
}
.head td{
    position: relative;
    vertical-align: middle;
    background-color: #5b9bd5;
    border-color: #5b9bd5;
    color: #44546a;
    font-family: "Open Sans", "Noto Sans", sans-serif;
    font-size: 26px;
    font-weight: bold;
}
.head .pad{
    padding-left: 12px;
}
.head button{
    position: absolute;
    right: 0;
    bottom: 1px;
    width: 13px;
    height: 13px;
    border: 1px solid #ababab;
    background-color: #fff;
}
.r2{
    height: 188px;
}
.r3{
    height: 94px;
}
.above{
    border-bottom-color: #217346;
}
.beside{
    border-right-color: #217346;
}
.picked{
    background-color: #c6c6c6;
    border-top: 1px solid #217346;
    border-left: 1px solid #217346;
    box-shadow: inset 1px 1px 0 #e6e6e6;
}
.active{
    border-left: 1px solid #217346;
    border-bottom: 2px solid #217346;
}
.vscroll{
    display: flex;
    flex-direction: column;
    width: 16px;
    padding: 1px 2px 0;
    background-color: #e6e6e6;
}
.vscroll button,.hscroll button{
    flex: none;
    width: 12px;
    height: 12px;
    border: 1px solid #ababab;
    background-color: #fff;
}
.thumb{
    border: 1px solid #ababab;
    background-color: #fff;
}
.vscroll .thumb{
    flex: 482;
    margin-top: 1px;
}
.vscroll .rest{
    flex: 121;
    background-color: #dadada;
}

/* листы */
.sheets{
    display: flex;
    align-items: center;
    height: 21px;
    flex: none;
    border-bottom: 1px solid #c6c6c6;
}
.arrows{
    display: flex;
    justify-content: space-between;
    width: 78px;
    padding: 0 31px 0 21px;
    opacity: 0.3;
}
.sheet{
    align-self: flex-start;
    height: 19px;
    padding: 4px 10px 0;
    background-color: #fff;
    border: 1px solid #ababab;
    border-top: 0;
    border-bottom: 2px solid #217346;
    color: #217346;
    font-weight: bold;
}
.plus{
    margin-left: 26px;
}
.sheets .dots{
    margin-left: auto;
}
.hscroll{
    display: flex;
    width: 38.1%;
    height: 12px;
    margin: 0 16px 0 11px;
}
.hscroll .before{
    flex: 365;
    background-color: #dadada;
}
.hscroll .thumb{
    flex: 121;
}
.hscroll .rest{
    flex: 61;
    background-color: #dadada;
}

/* строка состояния */
.status{
    display: flex;
    align-items: center;
    height: 15px;
    flex: none;
    padding: 1px 7px 0 5px;
    background-color: #f1f1f1;
}
.views{
    display: flex;
    align-self: stretch;
    margin-left: auto;
}
.views button{
    width: 30px;
}
.views .on{
    background-color: #c6c6c6;
}
.sign{
    margin: 0 3px;
}
.status input{
    appearance: none;
    width: 76px;
    height: 14px;
    background: linear-gradient(#aaa, #aaa) no-repeat center / 100% 1px, linear-gradient(#aaa, #aaa) no-repeat center / 1px 5px;
}
.status input::-webkit-slider-thumb{
    appearance: none;
    width: 3px;
    height: 9px;
    background-color: #555;
}
.zoom{
    margin-left: 7px;
}
```
